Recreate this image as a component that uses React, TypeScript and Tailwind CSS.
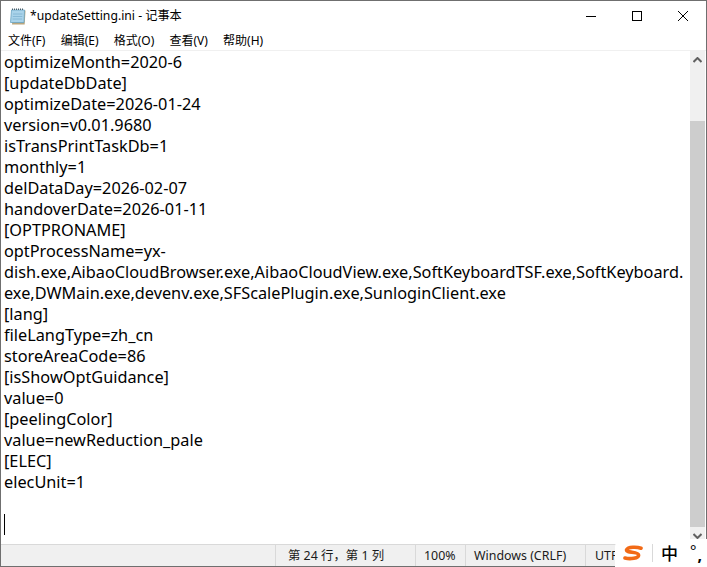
const cjk = '"Noto Sans","Noto Sans CJK SC",sans-serif';

const lines = [
  'optimizeMonth=2020-6',
  '[updateDbDate]',
  'optimizeDate=2026-01-24',
  'version=v0.01.9680',
  'isTransPrintTaskDb=1',
  'monthly=1',
  'delDataDay=2026-02-07',
  'handoverDate=2026-01-11',
  '[OPTPRONAME]',
  'optProcessName=yx-',
  'dish.exe,AibaoCloudBrowser.exe,AibaoCloudView.exe,SoftKeyboardTSF.exe,SoftKeyboard.',
  'exe,DWMain.exe,devenv.exe,SFScalePlugin.exe,SunloginClient.exe',
  '[lang]',
  'fileLangType=zh_cn',
  'storeAreaCode=86',
  '[isShowOptGuidance]',
  'value=0',
  '[peelingColor]',
  'value=newReduction_pale',
  '[ELEC]',
  'elecUnit=1',
];

const menus = ['文件(F)', '编辑(E)', '格式(O)', '查看(V)', '帮助(H)'];

const NotepadIcon = () => (
  <svg width="18" height="17" viewBox="0 0 18 17">
    <path d="M4 2.5h12.5l-.8 14H3z" fill="#b9a67e" />
    <path d="M2.5 2h13L15 14.5H1.5z" fill="#a9d3ea" stroke="#6aa3c2" strokeWidth="0.8" />
    <path d="M4 6h9.5M3.8 8.5h9.5M3.6 11h9.5" stroke="#7fb3d1" strokeWidth="0.8" />
    <path d="M3 1.2h12" stroke="#4a5d68" strokeWidth="1.6" strokeDasharray="1 1" />
  </svg>
);

const ArrowIcon = ({ up }: { up?: boolean }) => (
  <svg width="9" height="6" viewBox="0 0 9 6">
    <path
      d={up ? 'M.5 5 4.5 1 8.5 5' : 'M.5 1 4.5 5 8.5 1'}
      fill="none"
      stroke="#606060"
      strokeWidth="2"
    />
  </svg>
);

export default function App() {
  return (
    <div
      className="flex h-[567px] w-[707px] flex-col overflow-hidden border border-[#6f6f6f] bg-white text-black"
      style={{ fontFamily: cjk }}
    >
      <div className="flex h-[29px] shrink-0 items-center justify-between">
        <div className="flex items-center gap-[3px] pl-[8px] pt-[2px] text-[12.2px]">
          <NotepadIcon />
          <span>*updateSetting.ini - 记事本</span>
        </div>
        <div className="flex h-full">
          <div className="flex w-[46px] items-center justify-center">
            <div className="mt-[1px] h-px w-[10px] bg-black" />
          </div>
          <div className="flex w-[46px] items-center justify-center">
            <div className="mt-[1px] h-[10px] w-[10px] border border-black" />
          </div>
          <div className="flex w-[46px] items-center justify-center">
            <svg width="10" height="10" viewBox="0 0 10 10" className="mt-[1px]">
              <path d="M0 0 10 10M10 0 0 10" stroke="#000" strokeWidth="1" />
            </svg>
          </div>
        </div>
      </div>

      <div className="flex h-[20px] shrink-0 items-center gap-[15.2px] pl-[7px] pt-[2px] text-[12px]">
        {menus.map((m) => (
          <span key={m}>{m}</span>
        ))}
      </div>

      <div className="flex min-h-0 flex-1 border-t border-[#f0f0f0]">
        <div className="flex-1 px-[3px] pt-[1px] text-[16.3px] leading-[21px]">
          {lines.map((l) => (
            <div key={l} className="whitespace-nowrap">{l}</div>
          ))}
          <div className="h-[21px]" />
          <div className="h-[21px] w-px bg-black" />
        </div>
        <div className="flex w-[15px] shrink-0 flex-col bg-[#f0f0f0]">
          <div className="flex h-[17px] items-center justify-center"><ArrowIcon up /></div>
          <div className="mt-[53px] flex-1 bg-[#cdcdcd]" />
          <div className="flex h-[17px] items-center justify-center"><ArrowIcon /></div>
        </div>
        <div className="w-px shrink-0 bg-white" />
      </div>

      <div className="flex h-[22px] shrink-0 items-center border-t border-[#d9d9d9] bg-[#f0f0f0] text-[12.4px] text-[#1a1a1a]">
        <div className="h-full w-[275px] border-r border-[#d9d9d9]" />
        <div className="flex h-full w-[140px] items-center border-r border-[#d9d9d9] pl-[12px] pt-[1px]">第 24 行，第 1 列</div>
        <div className="flex h-full w-[50px] items-center border-r border-[#d9d9d9] pl-[8px] pt-[1px]">100%</div>
        <div className="flex h-full w-[120px] items-center border-r border-[#d9d9d9] pl-[8px] pt-[1px]">Windows (CRLF)</div>
        <div className="pl-[9px] pt-[1px]">UTF-8</div>
      </div>

      <div className="absolute left-[615px] top-[539px] flex h-[28px] w-[92px] items-center rounded-tl-[8px] bg-white">
        <svg width="20" height="17" viewBox="0 0 20 17" className="ml-[8px] mt-[1px]">
          <path d="M18 3.2C14 1.8 5 1.6 3.6 4.8 2.6 8 15.5 6.4 15.6 10c.2 3.4-8.6 4.4-13.6 3" fill="none" stroke="#f26a16" strokeWidth="3.6" strokeLinecap="round" />
        </svg>
        <div className="ml-[9px] h-[18px] w-px bg-[#d9d9d9]" />
        <span className="ml-[8px] text-[17px] font-medium leading-none">中</span>
        <span className="ml-[12px] mb-[6px] text-[15px] leading-none">°</span>
        <span className="ml-[1px] mt-[4px] text-[16px] font-bold leading-none">,</span>
      </div>
    </div>
  );
}
